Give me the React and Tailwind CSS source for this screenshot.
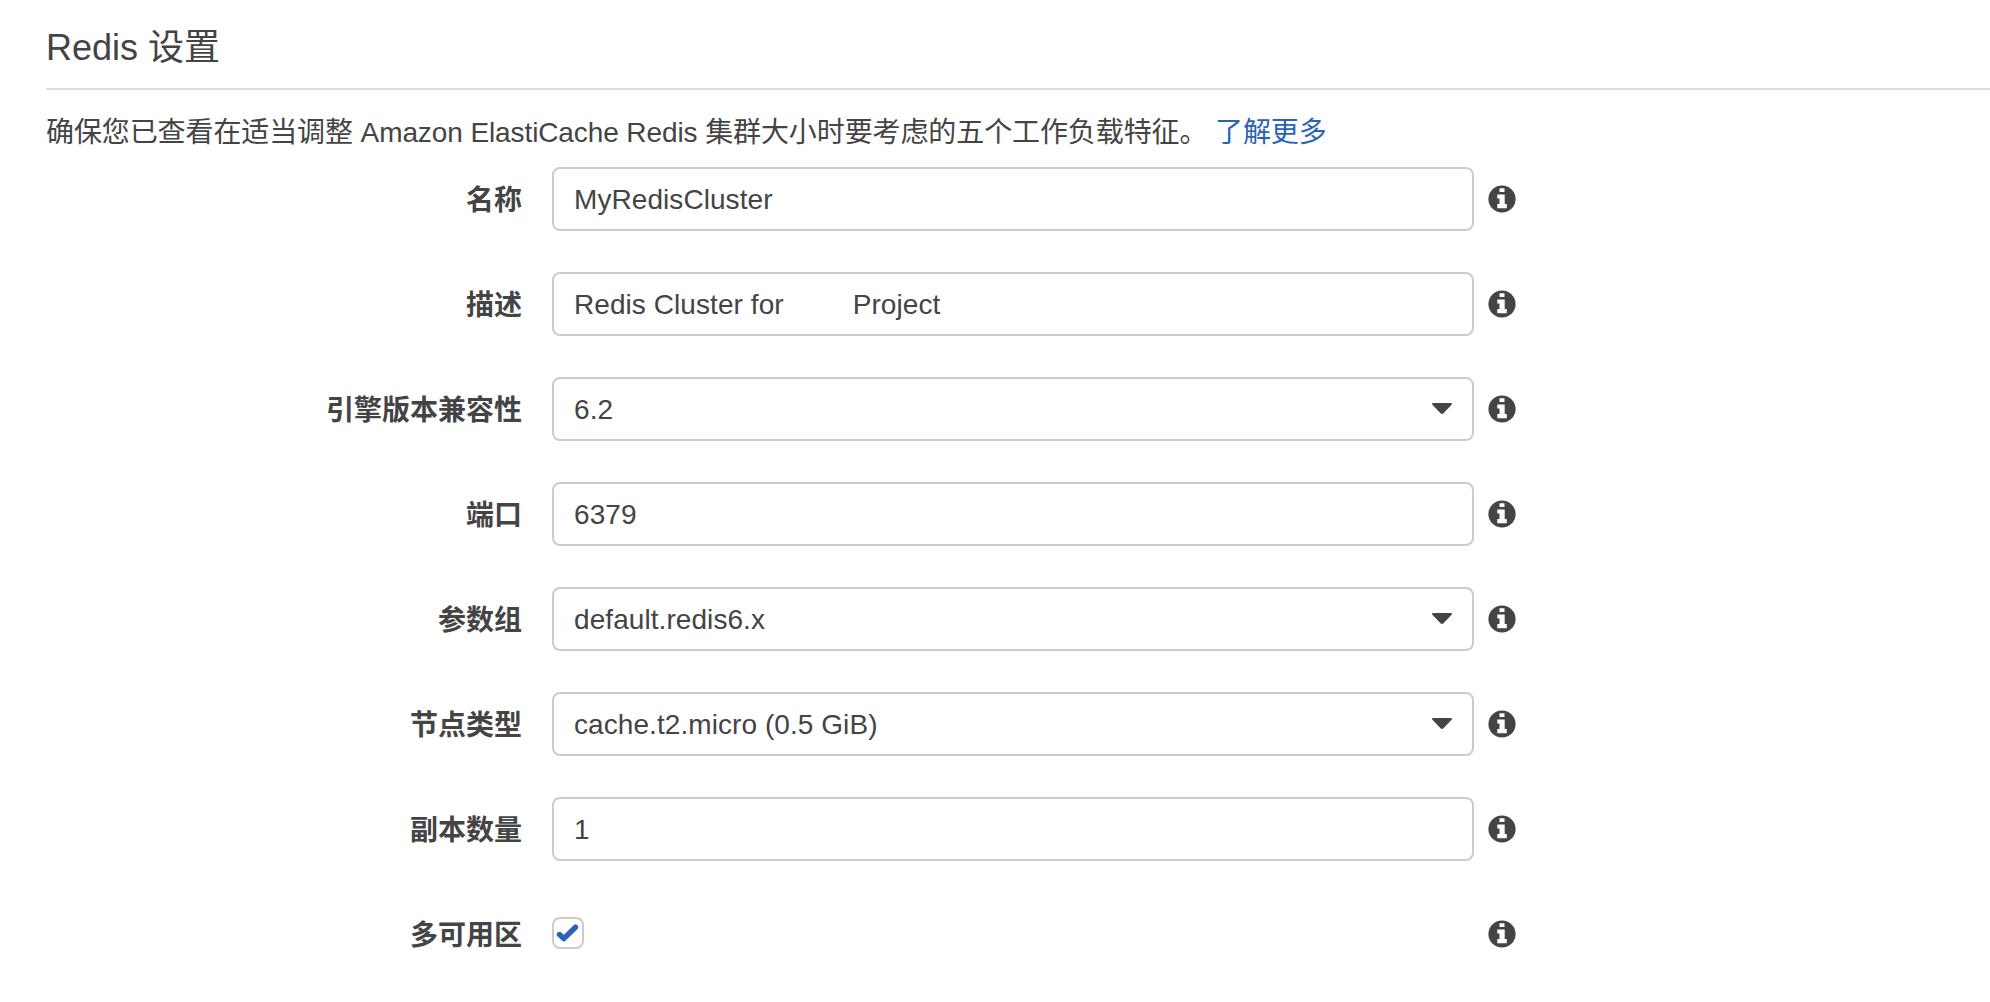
const rows = [
  { label: "名称", value: "MyRedisCluster" },
  { label: "描述", value: "Redis Cluster for", tail: "Project" },
  { label: "引擎版本兼容性", value: "6.2", select: true },
  { label: "端口", value: "6379" },
  { label: "参数组", value: "default.redis6.x", select: true },
  { label: "节点类型", value: "cache.t2.micro (0.5 GiB)", select: true },
  { label: "副本数量", value: "1" },
  { label: "多可用区", check: true },
];

function Info() {
  return (
    <svg className="h-7 w-7 shrink-0" viewBox="0 0 28 28">
      <circle cx="14" cy="14" r="13.6" fill="#444444" />
      <path d="M11.500 3.200h5v3.700h-5zM9.300 9.400h7.400v9.700h2.100v4.200H9.300v-4.200h2.200v-5.500H9.300z" fill="#ffffff" />
    </svg>
  );
}

function Row({ row }) {
  return (
    <div className="flex h-16 items-center">
      <div className="w-[522px] shrink-0 pt-[3px] text-right font-bold">{row.label}</div>
      <div className="ml-[30px] flex h-16 w-[922px] shrink-0 items-center">
        {row.check ? (
          <div className="mb-[2px] flex h-8 w-8 items-center justify-center rounded-[8px] border-2 border-[#cccccc] bg-white">
            <svg className="h-7 w-7" viewBox="2 2 28 28" fill="none" stroke="#2a62b8" strokeWidth="5.400" strokeLinecap="round" strokeLinejoin="round">
              <path d="M7.500 17.600L11.800 21.600L23.500 10.200" />
            </svg>
          </div>
        ) : (
          <div className="flex h-16 w-full items-center rounded-[8px] border-2 border-[#cccccc] px-5 tracking-[0.07px]">
            <span className="pt-px">{row.value}</span>
            {row.tail && <span className="ml-[69px] pt-px">{row.tail}</span>}
            {row.select && (
              <svg className="mb-px ml-auto h-[11px] w-5" viewBox="0 0 20 11" fill="#444444">
                <path d="M1.200 0h17.600q1.800 0 .8 1.700L11.500 10.200q-1.500 1.400-3 0L.4 1.700Q-.6 0 1.200 0z" />
              </svg>
            )}
          </div>
        )}
      </div>
      <div className="ml-[14px] flex"><Info /></div>
    </div>
  );
}

export default function App() {
  return (
    <main className="h-[1002px] overflow-hidden bg-white font-['Liberation_Sans','Noto_Sans_CJK_SC',sans-serif] text-[28px] leading-[40px] text-[#444444]">
      <h1 className="ml-[46px] flex h-[90px] items-center border-b-2 border-[#dddddd] pt-[8px] text-[36px]">Redis 设置</h1>
      <p className="ml-[46px] flex h-[77px] items-center whitespace-pre pt-[8px] tracking-[-0.1px]">
        确保您已查看在适当调整 Amazon ElastiCache Redis 集群大小时要考虑的五个工作负载特征。 <a className="text-[#2a62b8]">了解更多</a>
      </p>
      <div className="flex flex-col gap-[41px]">
        {rows.map((row) => <Row key={row.label} row={row} />)}
      </div>
    </main>
  );
}
